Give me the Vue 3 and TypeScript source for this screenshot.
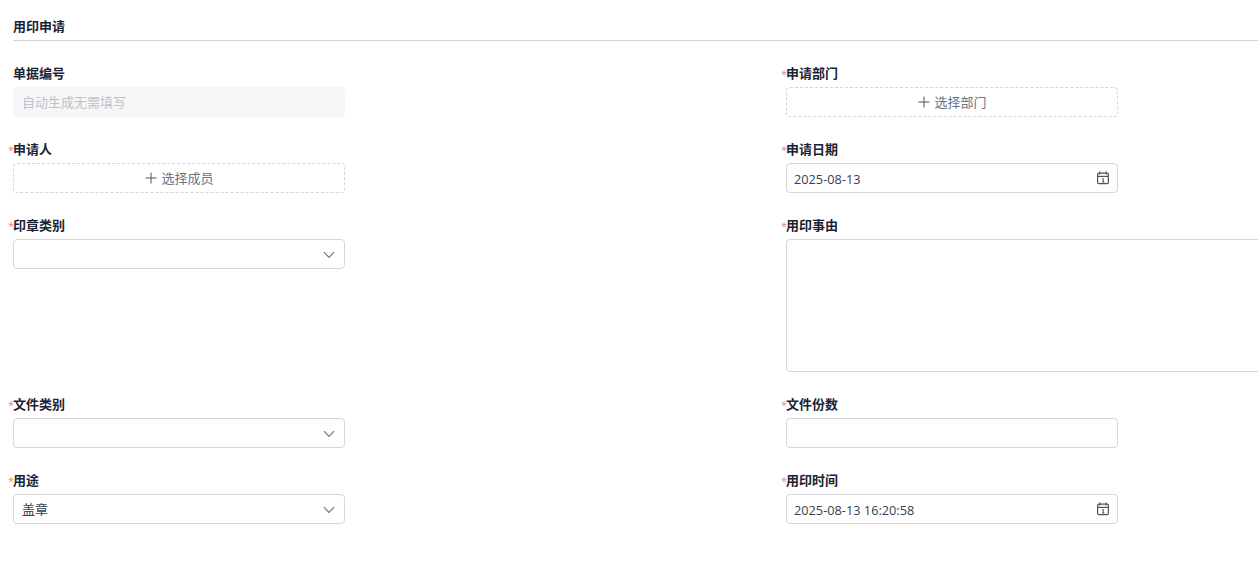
<template>
  <div class="page">
    <div class="section-title">用印申请</div>
    <form class="form-grid" @submit.prevent>
      <div v-for="field in fields" :key="field.label" class="form-item">
        <label class="form-label" :class="{ required: field.required }">{{ field.label }}</label>

        <div v-if="field.type === 'disabled'" class="control control-disabled">
          <span class="control-value">{{ field.value }}</span>
        </div>

        <button v-else-if="field.type === 'picker'" type="button" class="picker">
          <svg class="plus" viewBox="0 0 12 12" width="12" height="12">
            <path d="M7 .5v11M1.5 6h11" fill="none" stroke="currentColor" stroke-width="1" />
          </svg>
          <span class="picker-text">{{ field.value }}</span>
        </button>

        <div v-else-if="field.type === 'date'" class="control">
          <span class="date-value">{{ field.value }}</span>
          <svg class="calendar" viewBox="0 0 14 14" width="14" height="14">
            <path d="M3.8 .6v2.8M10.2 .6v2.8" fill="none" stroke="currentColor" stroke-width="1.2" />
            <rect x="1.6" y="2.2" width="10.8" height="10.4" rx="1.4" fill="none" stroke="currentColor" stroke-width="1.2" />
            <path d="M1.6 5.4h10.8" fill="none" stroke="currentColor" stroke-width="1.2" />
            <path d="M6.2 8l1-.6v3.6M6 11h2.4" fill="none" stroke="currentColor" stroke-width="1" />
          </svg>
        </div>

        <div v-else-if="field.type === 'select'" class="control">
          <span class="control-value">{{ field.value }}</span>
          <svg class="chevron" viewBox="0 0 12 8" width="12" height="8">
            <path d="M1 1.2l5 5.2 5-5.2" fill="none" stroke="currentColor" stroke-width="1.1" />
          </svg>
        </div>

        <div v-else-if="field.type === 'textarea'" class="control control-textarea"></div>

        <div v-else class="control"></div>
      </div>
    </form>
  </div>
</template>

<script setup lang="ts">
interface Field {
  label: string
  type: 'disabled' | 'picker' | 'date' | 'select' | 'textarea' | 'input'
  value?: string
  required?: boolean
}

// left and right column alternate
const fields: Field[] = [
  { label: '单据编号', type: 'disabled', value: '自动生成无需填写' },
  { label: '申请部门', type: 'picker', value: '选择部门', required: true },
  { label: '申请人', type: 'picker', value: '选择成员', required: true },
  { label: '申请日期', type: 'date', value: '2025-08-13', required: true },
  { label: '印章类别', type: 'select', required: true },
  { label: '用印事由', type: 'textarea', required: true },
  { label: '文件类别', type: 'select', required: true },
  { label: '文件份数', type: 'input', required: true },
  { label: '用途', type: 'select', value: '盖章', required: true },
  { label: '用印时间', type: 'date', value: '2025-08-13 16:20:58', required: true }
]
</script>

<style>
html,
body {
  margin: 0;
  background: #fff;
  overflow: hidden;
}
</style>

<style scoped>
.page {
  width: 1258px;
  height: 562px;
  overflow: hidden;
  box-sizing: border-box;
  padding-left: 13px;
  font-family: "Open Sans", "Noto Sans CJK SC", sans-serif;
  font-size: 13px;
  color: #1a2333;
}

.section-title {
  height: 40px;
  line-height: 52px;
  font-size: 13px;
  font-weight: 700;
  border-bottom: 1px solid #cfd2d6;
}

.form-grid {
  display: grid;
  grid-template-columns: 773px 773px;
  row-gap: 22px;
  padding-top: 22px;
}

.form-label {
  position: relative;
  display: block;
  height: 20px;
  line-height: 20px;
  margin-bottom: 4px;
  font-size: 13px;
  font-weight: 700;
}

.form-label.required::before {
  content: "*";
  position: absolute;
  right: calc(100% - 1px);
  top: 1px;
  font-weight: 400;
  font-size: 11px;
  color: #e58a8a;
}

.control {
  display: flex;
  align-items: center;
  justify-content: space-between;
  box-sizing: border-box;
  width: 332px;
  height: 30px;
  padding: 0 7px 0 8px;
  border: 1px solid #d4d6d9;
  border-radius: 4px;
  background: #fff;
}

.control-value {
  padding-bottom: 2px;
  font-size: 13px;
  color: #374151;
}

.date-value {
  margin-left: -1px;
  padding-top: 1px;
  font-size: 12.75px;
  color: #374151;
}

.control-disabled {
  border-color: #f5f6f8;
  background: #f5f6f8;
}

.control-disabled .control-value {
  color: #bfc2c7;
}

.control-textarea {
  width: 500px;
  height: 133px;
}

.picker {
  display: flex;
  align-items: center;
  justify-content: center;
  gap: 5px;
  box-sizing: border-box;
  width: 332px;
  height: 30px;
  padding: 0;
  border: 1px dashed #d4d6d9;
  border-radius: 4px;
  background: #fff;
  font: inherit;
  color: #6b7280;
}

.picker-text {
  padding-bottom: 2px;
}

.plus {
  overflow: visible;
  color: #4b5563;
}

.calendar {
  color: #4b5563;
}

.chevron {
  margin: 2px 2px 0 0;
  color: #6b7280;
}
</style>
